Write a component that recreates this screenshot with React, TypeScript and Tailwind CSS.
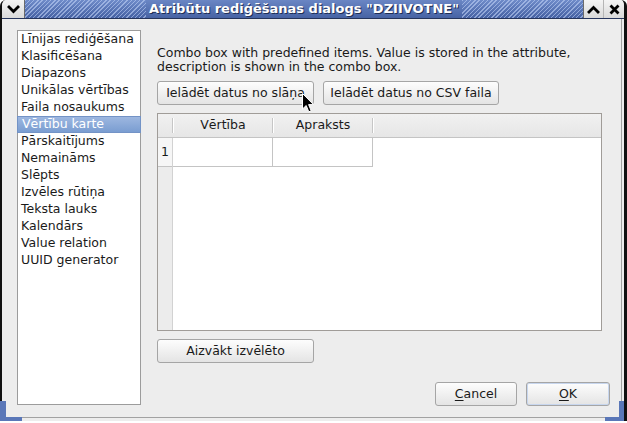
import React from "react";

const items = [
  "Līnijas rediģēšana",
  "Klasificēšana",
  "Diapazons",
  "Unikālas vērtības",
  "Faila nosaukums",
  "Vērtību karte",
  "Pārskaitījums",
  "Nemaināms",
  "Slēpts",
  "Izvēles rūtiņa",
  "Teksta lauks",
  "Kalendārs",
  "Value relation",
  "UUID generator",
];

const selected = "Vērtību karte";

function Button({ className, children }: { className?: string; children: React.ReactNode }) {
  return (
    <button
      className={
        "h-[24px] rounded-[3px] border border-[#a5a5a5] bg-gradient-to-b from-[#fdfdfd] to-[#e4e4e4] text-[12.5px] leading-none text-[#1a1a1a] flex items-center justify-center " +
        (className ?? "")
      }
    >
      {children}
    </button>
  );
}

function HeaderSep() {
  return (
    <div className="flex h-[15px] shrink-0">
      <div className="w-px bg-[#c6c6c6]" />
      <div className="w-px bg-white" />
    </div>
  );
}

function Chevron({ up }: { up?: boolean }) {
  return (
    <svg width="13" height="9" viewBox="0 0 13 9">
      <path
        d={up ? "M2 7 L6.5 2.5 L11 7" : "M2 2 L6.5 6.5 L11 2"}
        fill="none"
        stroke="#000"
        strokeWidth="2.8"
        strokeLinecap="square"
      />
    </svg>
  );
}

function Cursor() {
  return (
    <svg width="13" height="21" viewBox="0 0 13 21" className="absolute left-[302px] top-[93px]">
      <path
        d="M0.5 0.5 L0.5 16 L4.2 12.5 L6.8 18.8 L9.2 17.8 L6.6 11.6 L11.5 11.6 Z"
        fill="#000"
        stroke="#fff"
        strokeWidth="1"
        strokeLinejoin="miter"
      />
    </svg>
  );
}

export default function App() {
  return (
    <div className="relative w-[627px] h-[423px] bg-white font-['DejaVu_Sans',sans-serif] text-[12.5px] text-[#1a1a1a]">
      <div className="h-[421px] flex flex-col rounded-t-[6px] overflow-hidden border-l-2 border-r-[3px] border-[#111] bg-[#ededed]">
        {/* title bar */}
        <div className="h-[19px] shrink-0 flex border-b border-[#26355c]">
          <div className="w-[23px] shrink-0 flex items-center justify-center bg-gradient-to-b from-[#f4f4f4] to-[#d9d9d9] border-r border-[#6b6b6b]">
            <Chevron />
          </div>
          <div className="flex-1 flex items-center justify-center [background-image:repeating-linear-gradient(135deg,rgba(190,208,245,0.6)_0px,rgba(190,208,245,0.6)_1px,transparent_1px,transparent_3px),linear-gradient(#6f8bc9,#4561a3)]">
            <span className="px-[3px] h-full flex items-center bg-gradient-to-b from-[#6a86c4] to-[#4763a4] text-white font-bold text-[13px] [text-shadow:1px_1px_0_#1f2e55]">
              Atribūtu rediģēšanas dialogs "DZIIVOTNE"
            </span>
          </div>
          <div className="w-[41px] shrink-0 flex bg-gradient-to-b from-[#f4f4f4] to-[#d9d9d9] border-l border-[#6b6b6b]">
            <div className="w-[20px] flex items-center justify-center border-r border-[#b5b5b5]">
              <Chevron up />
            </div>
            <div className="flex-1 flex items-center justify-center">
              <svg width="11" height="11" viewBox="0 0 11 11">
                <path d="M1.5 1.5 L9.5 9.5 M9.5 1.5 L1.5 9.5" stroke="#000" strokeWidth="2.8" />
              </svg>
            </div>
          </div>
        </div>

        {/* dialog body */}
        <div className="flex-1 flex flex-col mr-[2px] mb-[3px] border-r border-b border-[#a2a2a2]">
          <div className="flex-1 flex pt-[11px] pl-[15px]">
            <div className="w-[124px] h-[375px] shrink-0 border border-[#9c9c9c] bg-white">
              {items.map((item) =>
                item === selected ? (
                  <div
                    key={item}
                    className="h-[17px] pl-[3px] flex items-center text-white bg-gradient-to-b from-[#9db7e0] to-[#7a9dd1] border border-[#7393c6] -ml-px -mr-px"
                  >
                    <span className="pl-px">{item}</span>
                  </div>
                ) : (
                  <div key={item} className="h-[17px] pl-[3px] flex items-center whitespace-nowrap">
                    {item}
                  </div>
                )
              )}
            </div>

            <div className="w-[469px] pl-[16px] flex flex-col">
              <p className="mt-[16px] w-[445px] leading-[14px]">
                Combo box with predefined items. Value is stored in the attribute, description is shown in the combo box.
              </p>

              <div className="mt-[7px] flex gap-[9px]">
                <Button className="w-[157px]">Ielādēt datus no slāņa</Button>
                <Button className="w-[176px]">Ielādēt datus no CSV faila</Button>
              </div>

              {/* value map table */}
              <div className="mt-[8px] w-[445px] h-[218px] border border-[#a09c98] bg-white flex flex-col">
                <div className="h-[24px] shrink-0 flex items-center bg-gradient-to-b from-[#f1f1f1] to-[#e6e6e6] border-b border-[#c4c4c4]">
                  <div className="w-[14px] h-full" />
                  <HeaderSep />
                  <div className="w-[98px] text-center">Vērtība</div>
                  <HeaderSep />
                  <div className="w-[98px] text-center">Apraksts</div>
                  <HeaderSep />
                  <div className="flex-1" />
                </div>
                <div className="flex-1 flex">
                  <div className="w-[15px] shrink-0 flex flex-col bg-[#ececec] border-r border-[#d2d2d2]">
                    <div className="h-[29px] bg-[#f6f6f6] border-b border-[#c4c4c4] flex items-center pl-[3px]">1</div>
                  </div>
                  <div className="flex h-[29px]">
                    <div className="w-[100px] border-r border-b border-[#c4c4c4]" />
                    <div className="w-[100px] border-r border-b border-[#c4c4c4]" />
                  </div>
                </div>
              </div>

              <Button className="mt-[8px] w-[157px]">Aizvākt izvēlēto</Button>

              <div className="mt-[19px] flex justify-end gap-[9px]">
                <Button className="w-[82px]">
                  <span className="underline underline-offset-2">C</span>ancel
                </Button>
                <Button className="w-[84px] border-[#7d9acb] shadow-[inset_0_0_0_1px_#c7d6ee]">
                  <span className="underline underline-offset-2">O</span>K
                </Button>
              </div>
            </div>
          </div>
        </div>
      </div>

      {/* resize corners */}
      <div className="absolute left-0 top-[401px] w-[6px] h-[20px] bg-[#5a77b8]" />
      <div className="absolute left-0 top-[417px] w-[22px] h-[4px] bg-[#5a77b8]" />
      <div className="absolute left-[619px] top-[401px] w-[5px] h-[20px] bg-[#5a77b8]" />
      <div className="absolute left-[605px] top-[417px] w-[19px] h-[4px] bg-[#5a77b8]" />

      <Cursor />
    </div>
  );
}
